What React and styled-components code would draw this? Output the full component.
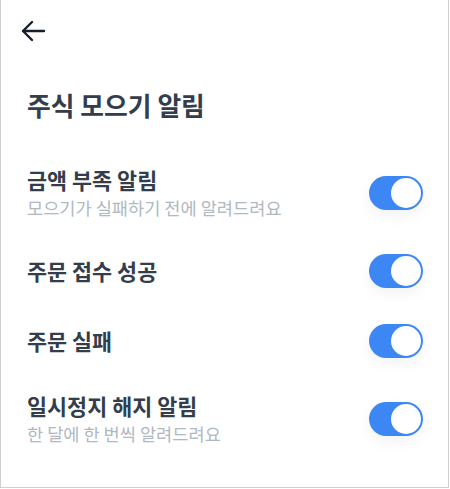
import React, { useState } from "react";
import styled, { createGlobalStyle } from "styled-components";

const Global = createGlobalStyle`
  html, body { margin: 0; padding: 0; background: #ffffff; }
  body {
    font-family: "Noto Sans CJK KR", "Noto Sans", sans-serif;
    -webkit-font-smoothing: antialiased;
  }
`;

const Frame = styled.div`
  box-sizing: border-box;
  width: 449px;
  height: 488px;
  background: #ffffff;
  border-left: 1px solid #cfcfcf;
  border-right: 1px solid #cfcfcf;
  border-bottom: 1px solid #cfcfcf;
  display: flex;
  flex-direction: column;
`;

const Header = styled.header`
  height: 62px;
  display: flex;
  align-items: center;
  padding-left: 19px;
`;

const BackButton = styled.button`
  border: 0;
  background: none;
  padding: 0;
  margin: 0;
  display: flex;
  align-items: center;
  cursor: pointer;
  color: #191f28;
`;

const Title = styled.h1`
  margin: 26px 0 28px;
  padding: 0 26px;
  font-size: 25.8px;
  font-weight: 700;
  line-height: 34px;
  color: #333d4b;
`;

const List = styled.ul`
  list-style: none;
  margin: 0;
  padding: 0;
`;

const Row = styled.li`
  display: flex;
  align-items: center;
  justify-content: space-between;
  padding: 15px 25px 15px 26px;
`;

const Texts = styled.div`
  display: flex;
  flex-direction: column;
  justify-content: center;
  min-height: 40px;
`;

const RowTitle = styled.span`
  font-size: 21.8px;
  font-weight: 700;
  line-height: 30px;
  color: #333d4b;
`;

const RowDesc = styled.span`
  font-size: 17.6px;
  font-weight: 400;
  line-height: 26px;
  color: #b0b8c1;
`;

const Track = styled.button`
  box-sizing: border-box;
  width: 54px;
  height: 34px;
  border: 0;
  border-radius: 17px;
  padding: 2px;
  background: ${(p) => (p.$on ? "#3d87f5" : "#e5e8eb")};
  display: flex;
  justify-content: ${(p) => (p.$on ? "flex-end" : "flex-start")};
  cursor: pointer;
  box-shadow: 0 6px 14px rgba(0, 0, 0, 0.05);
  flex-shrink: 0;
`;

const Knob = styled.span`
  width: 30px;
  height: 30px;
  border-radius: 50%;
  background: #ffffff;
`;

const Toggle = ({ on, onClick }) => (
  <Track $on={on} onClick={onClick} aria-pressed={on}>
    <Knob />
  </Track>
);

const items = [
  { title: "금액 부족 알림", desc: "모으기가 실패하기 전에 알려드려요" },
  { title: "주문 접수 성공" },
  { title: "주문 실패" },
  { title: "일시정지 해지 알림", desc: "한 달에 한 번씩 알려드려요" },
];

export default function App() {
  const [state, setState] = useState(items.map(() => true));
  return (
    <Frame>
      <Global />
      <Header>
        <BackButton aria-label="뒤로">
          <svg width="26" height="22" viewBox="0 0 26 22" fill="none">
            <path
              d="M24 11H3M12 2L3 11L12 20"
              stroke="currentColor"
              strokeWidth="2.4"
              strokeLinecap="round"
              strokeLinejoin="round"
            />
          </svg>
        </BackButton>
      </Header>
      <Title>주식 모으기 알림</Title>
      <List>
        {items.map((it, i) => (
          <Row key={i}>
            <Texts>
              <RowTitle>{it.title}</RowTitle>
              {it.desc && <RowDesc>{it.desc}</RowDesc>}
            </Texts>
            <Toggle
              on={state[i]}
              onClick={() =>
                setState((s) => s.map((v, j) => (j === i ? !v : v)))
              }
            />
          </Row>
        ))}
      </List>
    </Frame>
  );
}
